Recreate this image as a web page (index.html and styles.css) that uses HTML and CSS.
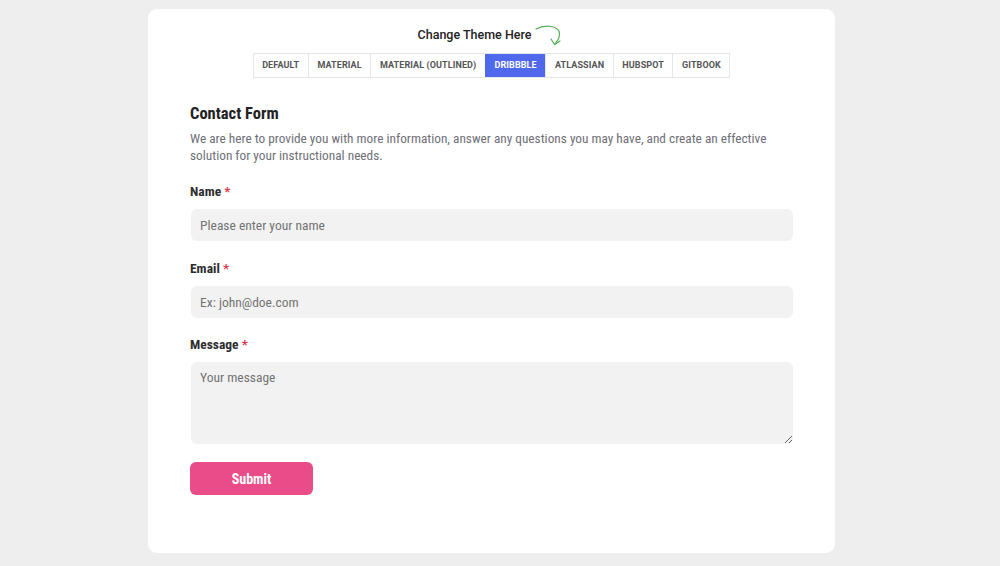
FILE: index.html
```html
<!DOCTYPE html>
<html>
<head>
<meta charset="utf-8">
<link rel="stylesheet" href="styles.css">
</head>
<body>
<div class="page">
  <div class="card">
    <div class="theme">
      <div class="theme-title"><span>Change Theme Here</span>
        <svg class="arrow" width="30" height="22" viewBox="0 0 30 22"><path d="M1 4 C9 0 20 0 24 6 C26 11 23 15 20 19" fill="none" stroke="#4caf50" stroke-width="1.2" stroke-linecap="round"/><path d="M16 14 L19.5 19.5 L25 16" fill="none" stroke="#4caf50" stroke-width="1.2" stroke-linecap="round" stroke-linejoin="round"/></svg>
      </div>
      <div class="tabs">
        <span class="tab">Default</span>
        <span class="tab">Material</span>
        <span class="tab">Material (Outlined)</span>
        <span class="tab active">Dribbble</span>
        <span class="tab">Atlassian</span>
        <span class="tab">Hubspot</span>
        <span class="tab">Gitbook</span>
      </div>
    </div>
    <form class="form">
      <h2 class="heading">Contact Form</h2>
      <p class="desc">We are here to provide you with more information, answer any questions you may have, and create an effective solution for your instructional needs.</p>
      <label class="label">Name <span class="req">*</span></label>
      <input class="field" type="text" placeholder="Please enter your name">
      <label class="label">Email <span class="req">*</span></label>
      <input class="field" type="text" placeholder="Ex: john@doe.com">
      <label class="label">Message <span class="req">*</span></label>
      <textarea class="field area" placeholder="Your message"></textarea>
      <button class="submit" type="button">Submit</button>
    </form>
  </div>
</div>
</body>
</html>
```
FILE: styles.css
```css
html, body { margin: 0; padding: 0; }
body { background: #eeeeee; font-family: Roboto, "Liberation Sans", sans-serif; }
.page { display: flex; justify-content: center; padding-top: 9px; }
.card { width: 687px; height: 544px; background: #fff; border-radius: 9px; margin-left: -17px; box-sizing: border-box; }
.theme { display: flex; flex-direction: column; align-items: center; padding-top: 16px; }
.theme-title { display: flex; align-items: flex-start; gap: 4px; font-size: 12.5px; font-weight: 500; color: #222; height: 20px; line-height: 18px; }
.theme-title span { padding-top: 1px; }
.tabs { display: flex; margin-top: 8px; border: 1px solid #e6e6e6; }
.tab { font-size: 9px; font-weight: 700; text-transform: uppercase; color: #555; padding: 0 8.6px; height: 23px; line-height: 23px; border-left: 1px solid #e6e6e6; letter-spacing: 0.1px; }
.tab:first-child { border-left: none; }
.tab.active { background: #4f68ec; color: #fff; border-left-color: #4f68ec; }
.form { display: flex; flex-direction: column; padding: 0 42px; font-stretch: 87.5%; margin-top: 26px; }
.heading { margin: 0; font-size: 16.5px; font-weight: 700; color: #222; line-height: 20px; }
.desc { margin: 7px 0 0; font-size: 13.3px; color: #6f6f78; line-height: 16.5px; }
.label { font-size: 13.5px; font-weight: 700; color: #2e2e2e; margin-top: 19px; line-height: 17px; }
.req { color: #d33c4c; }
.field { margin-top: 9px; margin-left: 1px; height: 32px; border: none; background: #f2f2f2; border-radius: 6px; padding: 0 9px; font-family: inherit; font-stretch: 87.5%; font-size: 13.5px; color: #333; outline: none; box-sizing: border-box; }
.field::placeholder { color: #737373; }
.field + .label { margin-top: 18.5px; }
.area { height: 82px; padding-top: 7px; resize: vertical; }
.submit { margin-top: 18px; width: 123px; height: 33px; border: none; border-radius: 6px; background: #ea4c89; color: #fff; font-family: inherit; font-stretch: 87.5%; font-weight: 700; font-size: 14px; }
```
